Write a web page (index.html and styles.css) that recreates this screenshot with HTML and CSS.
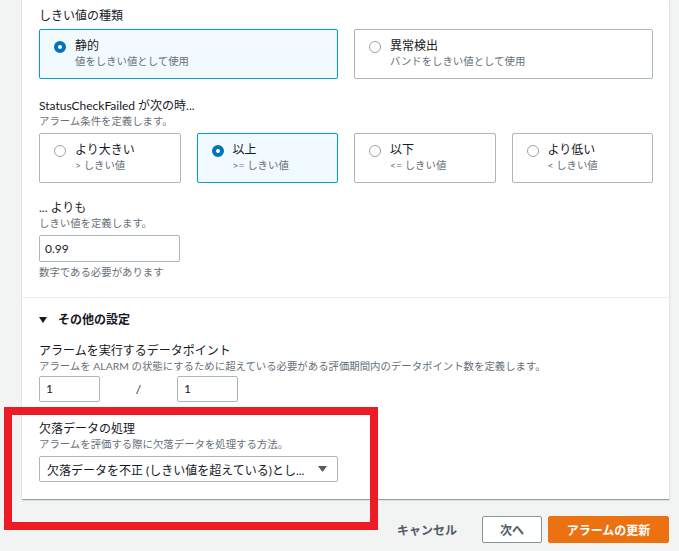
FILE: index.html
```html
<!DOCTYPE html>
<html lang="ja">
<head>
<meta charset="utf-8">
<title>アラームの編集</title>
<link rel="stylesheet" href="styles.css">
</head>
<body>
<div class="page">
  <div class="card">
    <div class="section first">
      <div class="field">
        <div class="label">しきい値の種類</div>
        <div class="tiles two">
          <div class="tile selected">
            <span class="radio on"></span>
            <div class="tile-text">
              <div class="tile-label">静的</div>
              <div class="tile-desc">値をしきい値として使用</div>
            </div>
          </div>
          <div class="tile">
            <span class="radio"></span>
            <div class="tile-text">
              <div class="tile-label">異常検出</div>
              <div class="tile-desc">バンドをしきい値として使用</div>
            </div>
          </div>
        </div>
      </div>

      <div class="field gap-19">
        <div class="label">StatusCheckFailed が次の時...</div>
        <div class="desc">アラーム条件を定義します。</div>
        <div class="tiles four">
          <div class="tile">
            <span class="radio"></span>
            <div class="tile-text">
              <div class="tile-label">より大きい</div>
              <div class="tile-desc">&gt; しきい値</div>
            </div>
          </div>
          <div class="tile selected">
            <span class="radio on"></span>
            <div class="tile-text">
              <div class="tile-label">以上</div>
              <div class="tile-desc">&gt;= しきい値</div>
            </div>
          </div>
          <div class="tile">
            <span class="radio"></span>
            <div class="tile-text">
              <div class="tile-label">以下</div>
              <div class="tile-desc">&lt;= しきい値</div>
            </div>
          </div>
          <div class="tile">
            <span class="radio"></span>
            <div class="tile-text">
              <div class="tile-label">より低い</div>
              <div class="tile-desc">&lt; しきい値</div>
            </div>
          </div>
        </div>
      </div>

      <div class="field gap-17">
        <div class="label">... よりも</div>
        <div class="desc">しきい値を定義します。</div>
        <div class="input wide">0.99</div>
        <div class="hint">数字である必要があります</div>
      </div>
    </div>

    <div class="section second">
      <div class="expander">
        <svg class="caret" width="8" height="6" viewBox="0 0 8 6"><path d="M0 0H8L4 6Z" fill="#16191f"/></svg>
        <span>その他の設定</span>
      </div>

      <div class="field gap-15">
        <div class="label">アラームを実行するデータポイント</div>
        <div class="desc">アラームを ALARM の状態にするために超えている必要がある評価期間内のデータポイント数を定義します。</div>
        <div class="points">
          <div class="input small">1</div>
          <div class="slash">/</div>
          <div class="input small">1</div>
        </div>
      </div>

      <div class="field gap-19">
        <div class="label">欠落データの処理</div>
        <div class="desc">アラームを評価する際に欠落データを処理する方法。</div>
        <div class="select">
          <span class="select-text">欠落データを不正 (しきい値を超えている)とし...</span>
          <svg class="select-caret" width="9" height="6" viewBox="0 0 9 6"><path d="M0 0H9L4.5 6Z" fill="#545b64"/></svg>
        </div>
      </div>
    </div>
  </div>

  <div class="actions">
    <button class="btn link">キャンセル</button>
    <button class="btn normal">次へ</button>
    <button class="btn primary">アラームの更新</button>
  </div>

  <div class="annotation"></div>
</div>
</body>
</html>
```

FILE: styles.css
```css
* {
  box-sizing: border-box;
}

html, body {
  margin: 0;
  padding: 0;
  background: #f2f3f3;
}

body {
  font-family: Lato, "Noto Sans CJK JP", sans-serif;
  color: #16191f;
  font-size: 12px;
}

.page {
  position: relative;
  width: 679px;
  height: 551px;
  padding: 0 10px 0 22px;
  overflow: hidden;
}

.card {
  background: #ffffff;
  width: 647px;
  box-shadow: -1px 0 0 #e3e6e6, 1px 0 0 #e3e6e6, 0 1px 1px rgba(0, 28, 36, 0.3), 1px 1px 1px rgba(0, 28, 36, 0.12);
}

.section {
  padding: 0 16px 0 17px;
}

.section.first {
  padding-top: 8px;
  padding-bottom: 18px;
  border-bottom: 1px solid #eaeded;
}

.section.second {
  padding-top: 14px;
  padding-bottom: 17px;
}

.gap-15 { margin-top: 15px; }
.gap-17 { margin-top: 17px; }
.gap-19 { margin-top: 19px; }

.label {
  font-size: 12px;
  line-height: 16px;
  color: #16191f;
  white-space: nowrap;
}

.desc, .hint {
  font-size: 10.4px;
  line-height: 14px;
  color: #687078;
  white-space: nowrap;
}

.tiles {
  display: grid;
  gap: 16px;
  margin-top: 5px;
}

.tiles.two {
  grid-template-columns: 299px 299px;
}

.tiles.four {
  grid-template-columns: repeat(4, 1fr);
  gap: 16px;
}

.tiles.four .tile {
  padding-top: 8px;
}

.tile {
  display: flex;
  align-items: flex-start;
  height: 50px;
  border: 1px solid #aab7b8;
  border-radius: 2px;
  padding: 8px 8px 0 14px;
  background: #ffffff;
}

.tile.selected {
  border-color: #00a1c9;
  background: #f1faff;
}

.radio {
  flex: none;
  width: 12px;
  height: 12px;
  margin-top: 3px;
  border-radius: 50%;
  border: 1px solid #9aa5a6;
  background: #ffffff;
}

.radio.on {
  border: 4px solid #0073bb;
}

.tile-text {
  margin-left: 9px;
}

.tile-label {
  font-size: 12px;
  line-height: 16px;
  color: #16191f;
}

.tile-desc {
  font-size: 10.4px;
  line-height: 14px;
  color: #687078;
}

.input {
  height: 27px;
  border: 1px solid #aab7b8;
  border-radius: 2px;
  background: #ffffff;
  font-size: 12px;
  line-height: 25px;
  padding: 0 5px;
  color: #16191f;
}

.input.wide {
  width: 141px;
  margin-top: 5px;
}

.hint {
  margin-top: 3px;
}

.expander {
  display: flex;
  align-items: center;
  font-size: 12px;
  line-height: 16px;
  font-weight: bold;
}

.caret {
  margin-right: 11px;
}

.points {
  display: flex;
  align-items: center;
  margin-top: 3px;
}

.input.small {
  width: 61px;
  height: 26px;
  line-height: 24px;
  padding: 0 6px;
}

.slash {
  width: 77px;
  text-align: center;
  font-size: 12px;
  color: #16191f;
}

.select {
  display: flex;
  align-items: center;
  justify-content: space-between;
  width: 299px;
  height: 26px;
  margin-top: 5px;
  border: 1px solid #aab7b8;
  border-radius: 2px;
  padding: 0 10px 0 7px;
  font-size: 12px;
  color: #16191f;
}

.select-text {
  white-space: nowrap;
}

.actions {
  display: flex;
  justify-content: flex-end;
  align-items: center;
  gap: 6px;
  margin-top: 17px;
  width: 647px;
}

.btn {
  font-family: Lato, "Noto Sans CJK JP", sans-serif;
  font-size: 12px;
  font-weight: bold;
  height: 27px;
  padding: 0 17px;
  border-radius: 2px;
  border: 1px solid transparent;
  background: transparent;
  color: #545b64;
}

.btn.link {
  margin-right: 1px;
}

.btn.normal {
  background: #ffffff;
  border-color: #879596;
  padding: 0 17px;
}

.btn.primary {
  background: #ec7211;
  border-color: #ec7211;
  color: #ffffff;
  width: 121px;
  padding: 0;
}

.annotation {
  position: absolute;
  left: 4px;
  top: 407px;
  width: 374px;
  height: 123px;
  border: 8px solid #ed1c24;
  pointer-events: none;
}
```
